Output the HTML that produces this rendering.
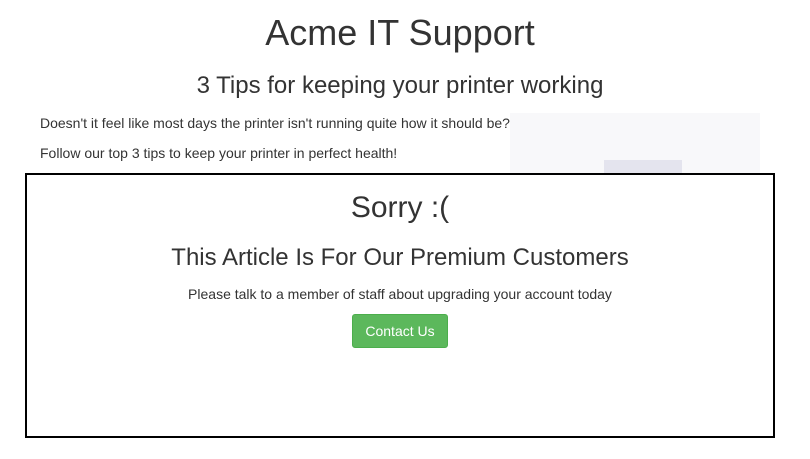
<!DOCTYPE html>
<html><head><style>
body{margin:0;width:810px;height:459px;background:#fff;font-family:"Liberation Sans",sans-serif;color:#333;position:relative;overflow:hidden}
.a{position:absolute;white-space:nowrap}
</style></head><body>
<div class="a" style="left:0;width:800px;text-align:center;top:12px;font-size:36px">Acme IT Support</div>
<div class="a" style="left:0;width:800px;text-align:center;top:72px;font-size:24px">3 Tips for keeping your printer working</div>
<div class="a" style="left:40px;top:115px;font-size:14px">Doesn't it feel like most days the printer isn't running quite how it should be?</div>
<div class="a" style="left:40px;top:145px;font-size:14px">Follow our top 3 tips to keep your printer in perfect health!</div>
<div class="a" style="left:510px;top:113px;width:250px;height:62px;background:#f8f8fa"></div>
<div class="a" style="left:604px;top:160px;width:78px;height:15px;background:#e4e4ee"></div>
<div class="a" style="left:25px;top:173px;width:746px;height:261px;border:2px solid #000;background:#fff"></div>
<div class="a" style="left:25px;width:750px;text-align:center;top:191px;font-size:30px">Sorry :(</div>
<div class="a" style="left:25px;width:750px;text-align:center;top:244px;font-size:24px">This Article Is For Our Premium Customers</div>
<div class="a" style="left:25px;width:750px;text-align:center;top:286px;font-size:14px">Please talk to a member of staff about upgrading your account today</div>
<div class="a" style="left:352px;top:314px;width:94px;height:32px;background:#5cb85c;border:1px solid #4cae4c;border-radius:3px;color:#fff;font-size:14px;line-height:32px;text-align:center">Contact Us</div>
</body></html>
